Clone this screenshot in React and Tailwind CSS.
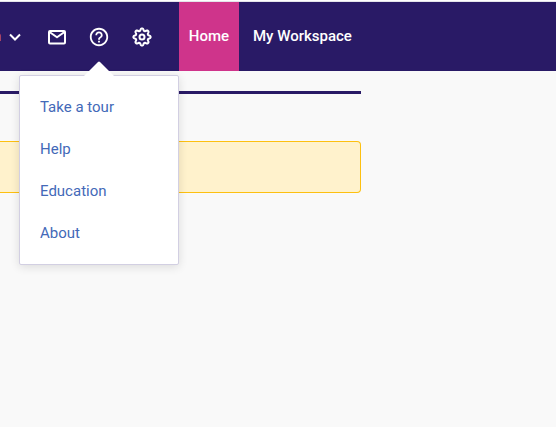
import { MdHelpOutline } from "react-icons/md";

const helpLinks = ["Take a tour", "Help", "Education", "About"];

function MailIcon() {
  return (
    <svg className="h-[22px] w-[22px]" viewBox="0 0 22 22" fill="none" stroke="currentColor" strokeWidth="2" strokeLinejoin="round" aria-hidden="true">
      <rect x="3" y="5" width="16" height="12.5" rx="1" />
      <path d="M3.5 6 L11 11.3 L18.5 6" />
    </svg>
  );
}

// Closed wavy outline with eight teeth around the centre (12, 12).
const gearPath =
  Array.from({ length: 96 }, (_, i) => {
    const angle = (i / 96) * Math.PI * 2;
    const wave = Math.tanh(1.5 * Math.cos(angle * 8)) / Math.tanh(1.5);
    const radius = 7.5 + 1.1 * wave;
    const x = 12 + radius * Math.cos(angle);
    const y = 12 + radius * Math.sin(angle);
    return `${i === 0 ? "M" : "L"}${x.toFixed(2)} ${y.toFixed(2)}`;
  }).join(" ") + " Z";

function GearIcon() {
  return (
    <svg className="h-6 w-6" viewBox="0 0 24 24" fill="none" stroke="currentColor" strokeWidth="2" strokeLinejoin="round" aria-hidden="true">
      <path d={gearPath} />
      <circle cx="12" cy="12" r="2.5" />
    </svg>
  );
}

function HelpMenu() {
  return (
    <div className="absolute top-full left-1/2 z-10 mt-[27px] w-40 -translate-x-1/2">
      <svg
        className="absolute -top-[14px] left-1/2 z-10 h-4 w-[30px] -translate-x-1/2"
        viewBox="0 0 30 16"
        fill="#ffffff"
        aria-hidden="true"
      >
        <path d="M0 15 L14 1 Q15 0 16 1 L30 15 V16 H0 Z" />
      </svg>
      <ul className="flex h-[190px] flex-col rounded-xs border border-[#d2cfe2] bg-white px-5 pt-[11px] shadow-[0_2px_10px_rgba(0,0,0,0.12)]">
        {helpLinks.map((label) => (
          <li key={label}>
            <a href="#" className="flex h-[42px] items-center text-[15px] text-[#4369b8]">
              {label}
            </a>
          </li>
        ))}
      </ul>
    </div>
  );
}

function Header() {
  return (
    <header className="flex h-[70px] shrink-0 items-stretch border-t border-[#e4e4ea] bg-[#291a66] text-white">
      <div className="flex flex-1 items-center">
        <button type="button" className="flex w-[21px] shrink-0 items-center justify-end gap-2 text-[15px] font-medium text-[#f0b45c]">
          <span>n</span>
          <svg className="h-2 w-3 shrink-0 text-white" viewBox="0 0 12 8" fill="none" stroke="currentColor" strokeWidth="2" aria-hidden="true">
            <path d="M1 1.5 L6 6.5 L11 1.5" />
          </svg>
        </button>
        <button type="button" aria-label="Messages" className="ml-[25px]">
          <MailIcon />
        </button>
        <div className="relative ml-5">
          <button type="button" aria-label="Help" aria-expanded="true" className="block">
            <MdHelpOutline size={22} />
          </button>
          <HelpMenu />
        </div>
        <button type="button" aria-label="Settings" className="ml-5">
          <GearIcon />
        </button>
        <nav className="ml-[25px] flex self-stretch text-[15px] font-medium">
          <a href="#" className="flex w-[60px] items-center justify-center bg-[#cf348b]">
            Home
          </a>
          <a href="#" className="flex items-center px-[14px] whitespace-nowrap">
            My Workspace
          </a>
        </nav>
      </div>
    </header>
  );
}

export default function App() {
  return (
    <div className="flex min-h-screen flex-col bg-white pt-px font-['Roboto','Liberation_Sans',sans-serif]">
      <Header />
      <main className="flex-1 bg-[#f9f9f9] pt-5 pr-[195px]">
        <div className="h-[3px] bg-[#291a66]" />
        <div className="mt-[47px] h-[52px] rounded-r border border-l-0 border-[#fdc010] bg-[#fff2cc]" />
      </main>
    </div>
  );
}
